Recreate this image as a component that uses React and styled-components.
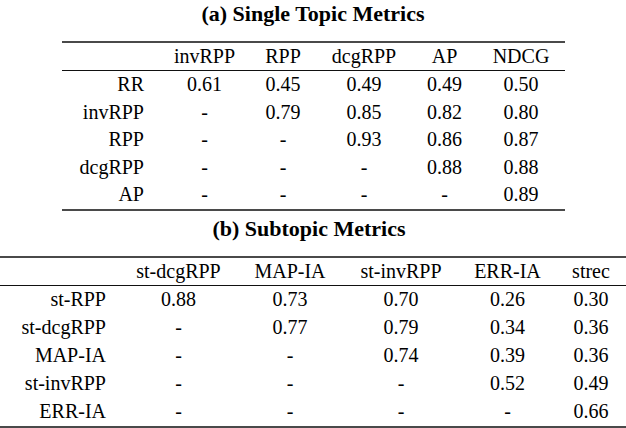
import React from 'react';
import styled, { createGlobalStyle } from 'styled-components';

const serif = `"Liberation Serif", "Times New Roman", Times, serif`;

const GlobalStyle = createGlobalStyle`
  html, body {
    margin: 0;
    padding: 0;
    background: #ffffff;
  }
`;

const Page = styled.div`
  width: 626px;
  height: 428px;
  overflow: hidden;
  font-family: ${serif};
  color: #000;
`;

const Section = styled.section`
  display: flex;
  flex-direction: column;
  padding-top: ${p => p.top}px;
`;

const Caption = styled.div`
  height: 28px;
  line-height: 28px;
  font-family: ${serif};
  font-size: 22px;
  font-weight: bold;
  text-align: center;
  margin-left: ${p => p.shift}px;
  margin-bottom: 13px;
  white-space: nowrap;
`;

const Table = styled.table`
  table-layout: fixed;
  border-collapse: separate;
  border-spacing: 0;
  width: ${p => p.width}px;
  margin-left: ${p => p.left}px;
  border-top: 2px solid #4a4a4a;
  border-bottom: 2px solid #4a4a4a;
  font-family: ${serif};
  font-size: 20px;
  color: #000;
`;

const Col = styled.col`
  width: ${p => p.w}px;
`;

const HeadCell = styled.th`
  height: 27px;
  padding: 0;
  font-family: ${serif};
  font-weight: normal;
  text-align: center;
  white-space: nowrap;
  border-bottom: 1px solid #111;
`;

const LabelCell = styled.td`
  height: ${p => p.h}px;
  padding: 0 ${p => p.pad}px 0 0;
  font-family: ${serif};
  text-align: right;
  white-space: nowrap;
`;

const Cell = styled.td`
  height: ${p => p.h}px;
  padding: 0;
  font-family: ${serif};
  text-align: center;
  white-space: nowrap;
`;

const single = {
  title: '(a) Single Topic Metrics',
  widths: [97, 91, 66, 96, 65, 88],
  cols: ['invRPP', 'RPP', 'dcgRPP', 'AP', 'NDCG'],
  rows: [
    ['RR', '0.61', '0.45', '0.49', '0.49', '0.50'],
    ['invRPP', '-', '0.79', '0.85', '0.82', '0.80'],
    ['RPP', '-', '-', '0.93', '0.86', '0.87'],
    ['dcgRPP', '-', '-', '-', '0.88', '0.88'],
    ['AP', '-', '-', '-', '-', '0.89'],
  ],
};

const subtopic = {
  title: '(b) Subtopic Metrics',
  widths: [120, 117, 106, 116, 97, 70],
  cols: ['st-dcgRPP', 'MAP-IA', 'st-invRPP', 'ERR-IA', 'strec'],
  rows: [
    ['st-RPP', '0.88', '0.73', '0.70', '0.26', '0.30'],
    ['st-dcgRPP', '-', '0.77', '0.79', '0.34', '0.36'],
    ['MAP-IA', '-', '-', '0.74', '0.39', '0.36'],
    ['st-invRPP', '-', '-', '-', '0.52', '0.49'],
    ['ERR-IA', '-', '-', '-', '-', '0.66'],
  ],
};

function MetricTable({ data, left, width, pad, rowH }) {
  return (
    <Table left={left} width={width}>
      <colgroup>
        {data.widths.map((w, i) => <Col key={i} w={w} />)}
      </colgroup>
      <thead>
        <tr>
          <HeadCell />
          {data.cols.map(c => <HeadCell key={c}>{c}</HeadCell>)}
        </tr>
      </thead>
      <tbody>
        {data.rows.map(r => (
          <tr key={r[0]}>
            <LabelCell h={rowH} pad={pad}>{r[0]}</LabelCell>
            {r.slice(1).map((v, i) => <Cell key={i} h={rowH}>{v}</Cell>)}
          </tr>
        ))}
      </tbody>
    </Table>
  );
}

export default function App() {
  return (
    <Page>
      <GlobalStyle />
      <Section top={0}>
        <Caption shift={0}>{single.title}</Caption>
        <MetricTable data={single} left={62} width={503} pad={15} rowH={27.5} />
      </Section>
      <Section top={4}>
        <Caption shift={-8}>{subtopic.title}</Caption>
        <MetricTable data={subtopic} left={0} width={626} pad={14} rowH={28} />
      </Section>
    </Page>
  );
}
